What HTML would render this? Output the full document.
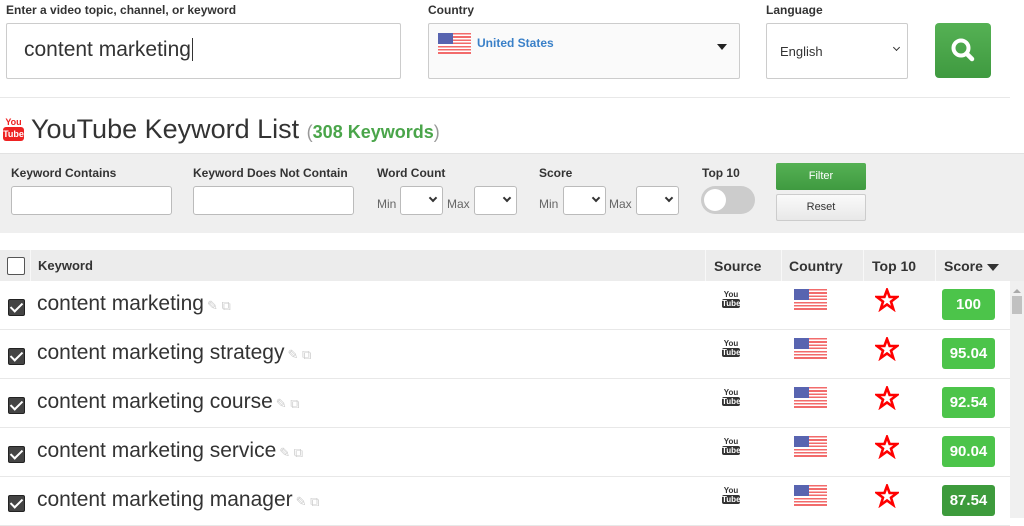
<!DOCTYPE html>
<html><head><style>
*{box-sizing:border-box;margin:0;padding:0}
body{width:1024px;height:518px;overflow:hidden;background:#fff;font-family:"Liberation Sans",Arial,sans-serif;color:#333;position:relative}
.a{position:absolute}
.lbl{font-size:12px;font-weight:bold;color:#333}
.box{border:1px solid #ccc;border-radius:2px;background:#fff}
.sel{border:1px solid #bbb;border-radius:3px;background:#fff;height:29px}
.chev{position:absolute;right:6px;top:8px;width:6px;height:6px;border-right:2px solid #333;border-bottom:2px solid #333;transform:rotate(45deg)}
.flag{position:absolute;width:33px;height:21px;background:repeating-linear-gradient(#f26b6b 0 1.6px,#fff 1.6px 3.2px)}
.flag:before{content:"";position:absolute;left:0;top:0;width:15px;height:11px;background:#5864b0}
.th{position:absolute;top:258px;font-size:14px;font-weight:bold;color:#333}
.row{position:absolute;left:0;width:1010px;height:49px;border-bottom:1px solid #e8e8e8}
.cb{position:absolute;left:8px;top:18px;width:17px;height:17px;background:#444;border:1px solid #222;border-radius:2px}
.cb:after{content:"";position:absolute;left:4px;top:0px;width:5px;height:10px;border-right:2.5px solid #fff;border-bottom:2.5px solid #fff;transform:rotate(45deg)}
.kw{position:absolute;left:37px;top:11px;font-size:21px;color:#333}
.kw span{color:#ccc;font-size:13px;margin-left:3px}
.yt{position:absolute;left:722px;top:9px;width:18px;font-size:8px;line-height:9px;text-align:center;font-weight:bold}
.yt b{display:block;background:#333;color:#fff;border-radius:2px}
.star{position:absolute;left:875px;top:7px}
.sc{position:absolute;left:942px;top:8px;width:53px;height:31px;border-radius:3px;background:#4cc44a;color:#fff;font-weight:bold;font-size:15px;text-align:center;line-height:31px}
</style></head><body>
<div class="a lbl" style="left:6px;top:3px">Enter a video topic, channel, or keyword</div>
<div class="a box" style="left:6px;top:23px;width:395px;height:56px"><span class="a" style="left:17px;top:14px;font-size:21px;color:#333">content marketing<span style="border-left:1px solid #333;margin-left:1px"></span></span></div>
<div class="a lbl" style="left:428px;top:3px">Country</div>
<div class="a box" style="left:428px;top:23px;width:312px;height:56px;background:#fafafa"><div class="flag" style="left:9px;top:9px"></div><span class="a" style="left:48px;top:12px;font-size:12px;font-weight:bold;color:#3a80c8">United States</span><span class="a" style="left:288px;top:20px;border:5px solid transparent;border-top:6px solid #222"></span></div>
<div class="a lbl" style="left:766px;top:3px">Language</div>
<div class="a box" style="left:766px;top:23px;width:142px;height:56px"><span class="a" style="left:13px;top:20px;font-size:13px;color:#333">English</span><div class="chev" style="right:8px;top:21px;width:5px;height:5px;border-width:1.5px"></div></div>
<div class="a" style="left:935px;top:23px;width:56px;height:55px;background:linear-gradient(#55b154,#3f9a40);border-radius:4px">
<svg width="56" height="55" viewBox="0 0 56 55"><circle cx="26" cy="25" r="7.5" fill="none" stroke="#fff" stroke-width="4"/><line x1="31.5" y1="30.5" x2="37" y2="36" stroke="#fff" stroke-width="4.5" stroke-linecap="round"/></svg></div>
<div class="a" style="left:0;top:97px;width:1010px;height:1px;background:#e8e8e8"></div>
<div class="a" style="left:3px;top:117px;width:21px;font-size:9px;line-height:10px;text-align:center;font-weight:bold;color:#e22"><div>You</div><div style="background:#e22;color:#fff;border-radius:3px;height:14px;line-height:14px">Tube</div></div>
<div class="a" style="left:31px;top:114px;font-size:27px;color:#333;white-space:nowrap">YouTube Keyword List <span style="font-size:18px;color:#999">(<b style="color:#4aa54a">308 Keywords</b>)</span></div>
<div class="a" style="left:0;top:153px;width:1024px;height:80px;background:#efefef;border-top:1px solid #e2e2e2"></div>
<div class="a lbl" style="left:11px;top:166px">Keyword Contains</div>
<div class="a sel" style="left:11px;top:186px;width:161px"></div>
<div class="a lbl" style="left:193px;top:166px">Keyword Does Not Contain</div>
<div class="a sel" style="left:193px;top:186px;width:161px"></div>
<div class="a lbl" style="left:377px;top:166px">Word Count</div>
<span class="a" style="left:377px;top:197px;font-size:12px;color:#666">Min</span><div class="a sel" style="left:400px;top:186px;width:43px"><div class="chev"></div></div>
<span class="a" style="left:447px;top:197px;font-size:12px;color:#666">Max</span><div class="a sel" style="left:474px;top:186px;width:43px"><div class="chev"></div></div>
<div class="a lbl" style="left:539px;top:166px">Score</div>
<span class="a" style="left:539px;top:197px;font-size:12px;color:#666">Min</span><div class="a sel" style="left:563px;top:186px;width:43px"><div class="chev"></div></div>
<span class="a" style="left:609px;top:197px;font-size:12px;color:#666">Max</span><div class="a sel" style="left:636px;top:186px;width:43px"><div class="chev"></div></div>
<div class="a lbl" style="left:702px;top:166px">Top 10</div>
<div class="a" style="left:701px;top:186px;width:54px;height:28px;border-radius:14px;background:#ccc"><div class="a" style="left:3px;top:3px;width:22px;height:22px;border-radius:50%;background:#fff"></div></div>
<div class="a" style="left:776px;top:163px;width:90px;height:27px;background:linear-gradient(#55b154,#3f9a40);border-radius:2px;color:#fff;font-size:11px;text-align:center;line-height:27px">Filter</div>
<div class="a" style="left:776px;top:194px;width:90px;height:27px;background:linear-gradient(#fafafa,#e8e8e8);border:1px solid #ccc;border-radius:2px;color:#333;font-size:11px;text-align:center;line-height:25px">Reset</div>
<div class="a" style="left:0;top:250px;width:1024px;height:31px;background:#ececec"></div>
<div class="a" style="left:30px;top:250px;width:1px;height:31px;background:#f8f8f8"></div>
<div class="a" style="left:705px;top:250px;width:1px;height:31px;background:#f8f8f8"></div>
<div class="a" style="left:781px;top:250px;width:1px;height:31px;background:#f8f8f8"></div>
<div class="a" style="left:863px;top:250px;width:1px;height:31px;background:#f8f8f8"></div>
<div class="a" style="left:935px;top:250px;width:1px;height:31px;background:#f8f8f8"></div>
<div class="a" style="left:7px;top:257px;width:18px;height:18px;border:1.5px solid #555;border-radius:2px;background:#fff"></div>
<div class="th" style="left:38px;font-size:13px">Keyword</div>
<div class="th" style="left:714px">Source</div>
<div class="th" style="left:789px">Country</div>
<div class="th" style="left:872px">Top 10</div>
<div class="th" style="left:944px">Score <span style="display:inline-block;border:6px solid transparent;border-top:7px solid #333;vertical-align:-6px"></span></div>
<div class="a" style="left:1010px;top:281px;width:14px;height:237px;background:#f0f0f0"></div>
<div class="a" style="left:1012px;top:296px;width:10px;height:18px;background:#c1c1c1"></div>
<div class="a" style="left:1013px;top:285px;border:4px solid transparent;border-bottom:4px solid #aaa"></div>

<svg width="0" height="0" style="position:absolute"><defs><polygon id="st" points="12,2 14.6,9 22,9 16,13.6 18.3,21 12,16.5 5.7,21 8,13.6 2,9 9.4,9" fill="#fff" stroke="#f00" stroke-width="2.6" stroke-linejoin="miter"/></defs></svg>
<div class="row" style="top:281px"><div class="cb"></div><div class="kw">content marketing<span>✎ ⧉</span></div><div class="yt">You<b>Tube</b></div><div class="flag" style="left:794px;top:8px"></div><svg class="star" width="24" height="24"><use href="#st"/></svg><div class="sc">100</div></div>
<div class="row" style="top:330px"><div class="cb"></div><div class="kw">content marketing strategy<span>✎ ⧉</span></div><div class="yt">You<b>Tube</b></div><div class="flag" style="left:794px;top:8px"></div><svg class="star" width="24" height="24"><use href="#st"/></svg><div class="sc">95.04</div></div>
<div class="row" style="top:379px"><div class="cb"></div><div class="kw">content marketing course<span>✎ ⧉</span></div><div class="yt">You<b>Tube</b></div><div class="flag" style="left:794px;top:8px"></div><svg class="star" width="24" height="24"><use href="#st"/></svg><div class="sc">92.54</div></div>
<div class="row" style="top:428px"><div class="cb"></div><div class="kw">content marketing service<span>✎ ⧉</span></div><div class="yt">You<b>Tube</b></div><div class="flag" style="left:794px;top:8px"></div><svg class="star" width="24" height="24"><use href="#st"/></svg><div class="sc">90.04</div></div>
<div class="row" style="top:477px"><div class="cb"></div><div class="kw">content marketing manager<span>✎ ⧉</span></div><div class="yt">You<b>Tube</b></div><div class="flag" style="left:794px;top:8px"></div><svg class="star" width="24" height="24"><use href="#st"/></svg><div class="sc" style="background:#3d9b3c">87.54</div></div>
</body></html>
